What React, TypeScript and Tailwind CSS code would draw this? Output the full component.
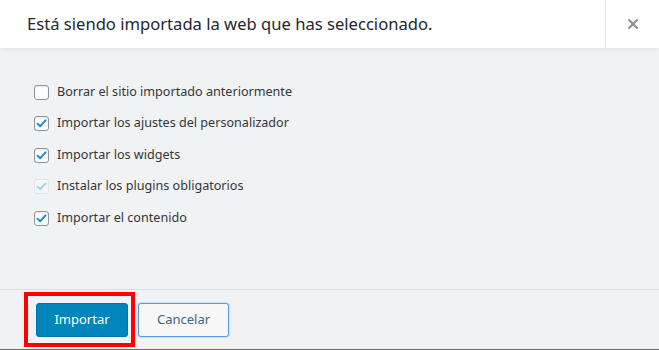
import { X } from "lucide-react";

type Option = {
  label: string;
  checked: boolean;
  disabled?: boolean;
};

const options: Option[] = [
  { label: "Borrar el sitio importado anteriormente", checked: false },
  { label: "Importar los ajustes del personalizador", checked: true },
  { label: "Importar los widgets", checked: true },
  { label: "Instalar los plugins obligatorios", checked: true, disabled: true },
  { label: "Importar el contenido", checked: true },
];

function CheckBox({ checked, disabled }: { checked: boolean; disabled?: boolean }) {
  return (
    <span
      className={
        disabled
          ? "flex h-[15px] w-[15px] items-center justify-center rounded-[3px] border border-[#e2e4e7] bg-[#f5f6f7]"
          : "flex h-[15px] w-[15px] items-center justify-center rounded-[3px] border border-[#8d96a0] bg-white shadow-[inset_0_1px_2px_rgba(0,0,0,0.1)]"
      }
    >
      {checked ? (
        <svg viewBox="0 0 16 16" className="h-[13px] w-[13px]">
          <path
            d="M3 8.2 L6.4 11.4 L13 4.2"
            fill="none"
            stroke={disabled ? "#a7d3ea" : "#1e8cbe"}
            strokeWidth="2.4"
            strokeLinecap="round"
            strokeLinejoin="round"
          />
        </svg>
      ) : null}
    </span>
  );
}

export default function App() {
  return (
    <div className="flex h-[350px] w-[659px] flex-col overflow-hidden bg-[#f1f2f4] font-['Noto_Sans',sans-serif]">
      <header className="relative z-10 flex h-12 shrink-0 items-stretch bg-white shadow-[0_1px_6px_rgba(0,0,0,0.08)]">
        <h1 className="flex flex-1 items-center pl-[27px] text-[16.6px] font-normal text-[#23282d]">
          Está siendo importada la web que has seleccionado.
        </h1>
        <button
          type="button"
          className="flex w-[54px] items-center justify-center border-l border-[#e5e5e5] text-[#8a8f94]"
        >
          <X className="h-4 w-4" strokeWidth={3} />
        </button>
      </header>

      <div className="flex flex-1 flex-col gap-[15.5px] pl-[34px] pt-[36px]">
        {options.map((option) => (
          <label key={option.label} className="flex h-[16px] items-center gap-[8px] text-[12.6px] text-[#32373c]">
            <CheckBox checked={option.checked} disabled={option.disabled} />
            <span>{option.label}</span>
          </label>
        ))}
      </div>

      <footer className="flex h-[61px] shrink-0 items-center border-t border-[#dcdcde] border-b border-b-[#6c6c6c] pl-[24px]">
        <div className="flex h-[55px] w-[111px] items-center justify-end border-4 border-[#ff0000] pr-[3px]">
          <button
            type="button"
            className="h-[34px] w-[92px] rounded-[3px] border border-[#0073aa] bg-[#0085ba] text-[13px] text-white"
          >
            Importar
          </button>
        </div>
        <button
          type="button"
          className="ml-[3px] h-[34px] w-[91px] rounded-[3px] border border-[#5b9dd9] bg-[#f7f7f7] text-[13px] text-[#3c6587] shadow-[0_0_2px_rgba(30,140,190,0.6)]"
        >
          Cancelar
        </button>
      </footer>
    </div>
  );
}
